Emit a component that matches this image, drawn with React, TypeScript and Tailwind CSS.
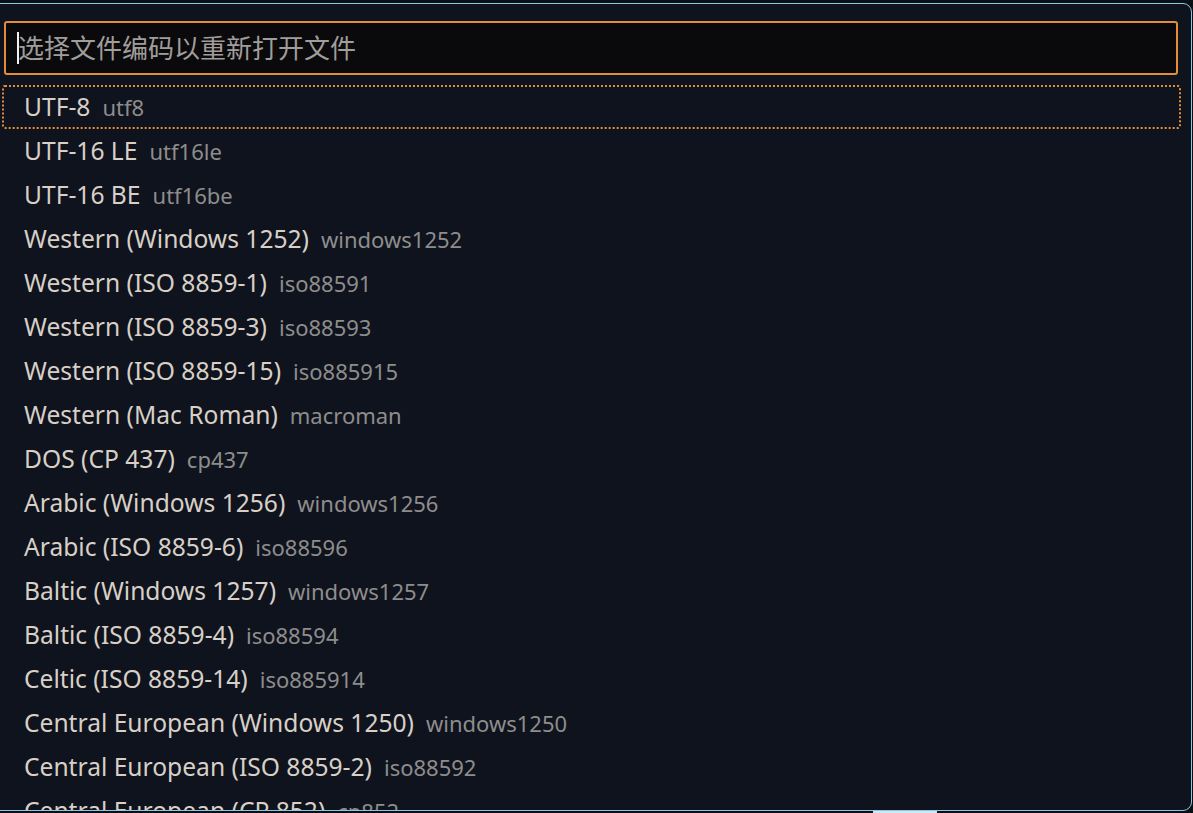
import React from 'react';

const encodings: { label: string; id: string }[] = [
  { label: 'UTF-8', id: 'utf8' },
  { label: 'UTF-16 LE', id: 'utf16le' },
  { label: 'UTF-16 BE', id: 'utf16be' },
  { label: 'Western (Windows 1252)', id: 'windows1252' },
  { label: 'Western (ISO 8859-1)', id: 'iso88591' },
  { label: 'Western (ISO 8859-3)', id: 'iso88593' },
  { label: 'Western (ISO 8859-15)', id: 'iso885915' },
  { label: 'Western (Mac Roman)', id: 'macroman' },
  { label: 'DOS (CP 437)', id: 'cp437' },
  { label: 'Arabic (Windows 1256)', id: 'windows1256' },
  { label: 'Arabic (ISO 8859-6)', id: 'iso88596' },
  { label: 'Baltic (Windows 1257)', id: 'windows1257' },
  { label: 'Baltic (ISO 8859-4)', id: 'iso88594' },
  { label: 'Celtic (ISO 8859-14)', id: 'iso885914' },
  { label: 'Central European (Windows 1250)', id: 'windows1250' },
  { label: 'Central European (ISO 8859-2)', id: 'iso88592' },
  { label: 'Central European (CP 852)', id: 'cp852' },
];

const App: React.FC = () => {
  return (
    <div className="relative w-[1193px] h-[813px] overflow-hidden bg-[#0b0e14] pt-[3px] font-['Noto_Sans','Noto_Sans_CJK_SC',sans-serif]">
      <div className="ml-[-10px] w-[1202px] h-[808px] overflow-hidden rounded-[9px] border border-[#86c9e4] bg-[#0f131e] pl-[13px] pt-[17px]">
        {/* quick input */}
        <div className="flex h-[54px] w-[1174px] items-center rounded-[3px] border-2 border-[#e38d3c] bg-[#0a090c] pl-[11px]">
          <span className="h-[32px] w-[2px] bg-[#f0f0f0]" />
          <span className="-ml-px text-[26px] leading-none text-[#a09d9b]">选择文件编码以重新打开文件</span>
        </div>

        {/* list */}
        <div className="ml-[-2px] mt-[10px] w-[1179px]">
          {encodings.map((e, i) => (
            <div
              key={e.id}
              className={`flex h-[44px] items-center gap-[12px] pl-[22px] ${
                i === 0 ? 'rounded-[3px] outline-2 outline-dotted outline-offset-[-2px] outline-[#e38d3c]' : ''
              }`}
            >
              <span className="text-[24.6px] text-[#d8d0c6]">{e.label}</span>
              <span className="text-[22px] text-[#8e8d8c]">{e.id}</span>
            </div>
          ))}
        </div>
      </div>
      <div className="absolute bottom-0 left-[873px] h-[2px] w-[64px] bg-[#cfe8f2]" />
    </div>
  );
};

export default App;
